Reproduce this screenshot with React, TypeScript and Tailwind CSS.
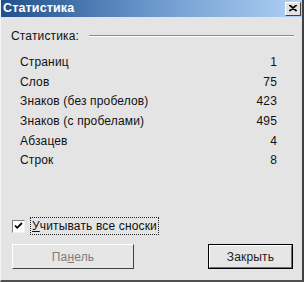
export default function App() {
  const rows: [string, string][] = [
    ["Страниц", "1"],
    ["Слов", "75"],
    ["Знаков (без пробелов)", "423"],
    ["Знаков (с пробелами)", "495"],
    ["Абзацев", "4"],
    ["Строк", "8"],
  ];

  return (
    <div
      className="w-[304px] h-[282px] bg-[#e4e4e4] flex flex-col border-l border-l-[#f4f4f4] border-r-2 border-r-[#404040] border-b-2 border-b-[#505050] text-[12px] tracking-[0.15px] text-[#111]"
      style={{ fontFamily: '"Liberation Sans", Arial, sans-serif' }}
    >
      {/* title bar */}
      <div className="h-[17px] flex items-center justify-between pl-[2px] pr-[1px] bg-gradient-to-r from-[#1f518c] via-[#6b98cc] to-[#b0d2f4]">
        <span className="text-white font-bold text-[12.5px] leading-none">Статистика</span>
        <div className="w-[16px] h-[14px] bg-[#e2e2e2] border border-t-white border-l-white border-r-[#404040] border-b-[#404040] flex items-center justify-center">
          <svg width="8" height="7" viewBox="0 0 8 7">
            <path d="M0 0 L7 6 M1 0 L8 6 M7 0 L0 6 M8 0 L1 6" stroke="#000" strokeWidth="1.1" />
          </svg>
        </div>
      </div>

      {/* group header */}
      <div className="flex items-center mt-[11px] pl-[10px] pr-[8px] h-[16px]">
        <span className="leading-none">Статистика:</span>
        <div className="flex-1 ml-[10px] flex flex-col">
          <div className="h-px bg-[#8a8a8a]" />
          <div className="h-px bg-white" />
        </div>
      </div>

      {/* stats */}
      <div className="flex flex-col mt-[8px] pl-[19px] pr-[25px]">
        {rows.map(([label, value]) => (
          <div key={label} className="h-[19.7px] flex items-center justify-between">
            <span>{label}</span>
            <span>{value}</span>
          </div>
        ))}
      </div>

      {/* checkbox */}
      <div className="flex items-center mt-[47px] pl-[11px]">
        <div className="w-[13px] h-[13px] bg-white border border-t-[#808080] border-l-[#808080] border-r-[#f0f0f0] border-b-[#f0f0f0] flex items-center justify-center">
          <svg width="9" height="8" viewBox="0 0 9 8">
            <path d="M1 3.5 L3.2 5.8 L8 1" stroke="#000" strokeWidth="1.8" fill="none" />
          </svg>
        </div>
        <div className="ml-[5px] px-[1px] h-[18px] flex items-center border border-dotted border-[#222]">
          <span>
            <span className="underline">У</span>читывать все сноски
          </span>
        </div>
      </div>

      {/* buttons */}
      <div className="flex justify-between mt-[9px] pl-[11px] pr-[9px]">
        <div className="w-[122px] h-[25px] bg-[#e6e6e6] border border-t-white border-l-white border-r-[#404040] border-b-[#404040] flex items-center justify-center text-[#7c7c7c]">
          <span>
            Па<span className="underline">н</span>ель
          </span>
        </div>
        <div className="w-[85px] h-[25px] border border-black">
          <div className="w-full h-full bg-[#e6e6e6] border border-t-white border-l-white border-r-[#707070] border-b-[#707070] flex items-center justify-center text-[#222]">
            Закрыть
          </div>
        </div>
      </div>
    </div>
  );
}
